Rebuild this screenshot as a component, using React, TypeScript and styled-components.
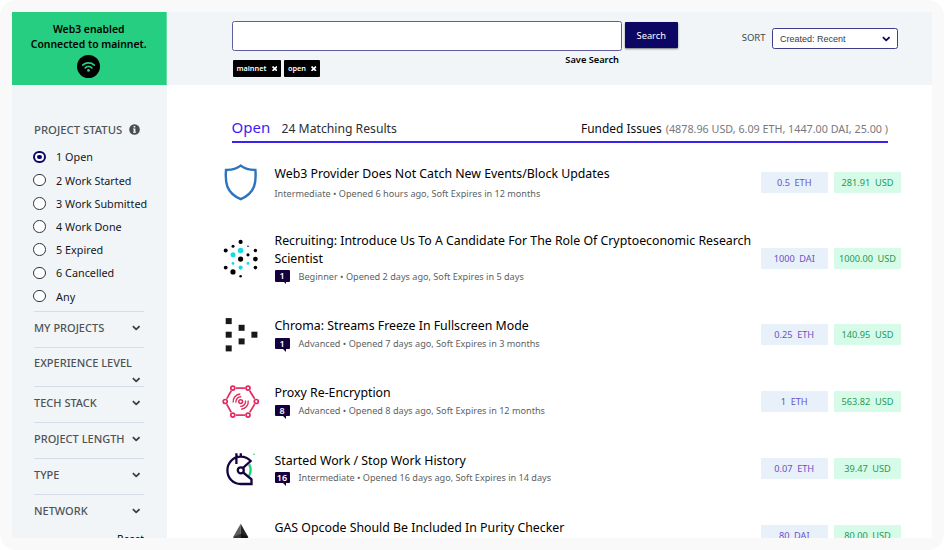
import React from "react";
import styled, { createGlobalStyle } from "styled-components";

const GlobalStyle = createGlobalStyle`
  *, *::before, *::after { box-sizing: border-box; }
  body { margin: 0; background: #fff; font-family: "Noto Sans", "Open Sans", sans-serif; color: #000; }
`;

const Frame = styled.div`
  width: 944px;
  height: 550px;
  padding: 12px;
  background: #f9f9f9;
  border-radius: 16px;
`;

const Page = styled.div`
  display: grid;
  grid-template-columns: 154.5px 1fr;
  height: 526px;
  overflow: hidden;
  background: #fff;
`;

/* Sidebar */

const Sidebar = styled.aside`
  height: 560px;
  background: #f1f5f8;
`;

const Network = styled.div`
  display: flex;
  flex-direction: column;
  align-items: center;
  height: 72.5px;
  padding-top: 9.6px;
  background: #25ce81;
  border-right: 1px solid #62dda4;
  font-size: 10.4px;
  font-weight: 600;
  line-height: 15.5px;
  text-align: center;
`;

const WifiBadge = styled.div`
  display: grid;
  place-items: center;
  width: 23px;
  height: 23px;
  margin-top: 2.6px;
  border-radius: 50%;
  background: #000;
`;

const Filters = styled.div`
  width: 132px;
  padding: 36.6px 0 0 22px;
`;

const StatusHeading = styled.div`
  display: flex;
  align-items: center;
  gap: 7px;
  height: 17px;
  margin-bottom: 7.3px;
  font-size: 11.3px;
  font-weight: 500;
  color: #4f5356;
  white-space: nowrap;
`;

const StatusOption = styled.div`
  display: flex;
  align-items: center;
  gap: 10.3px;
  width: 122px;
  height: 23.2px;
  margin-left: -0.8px;
  font-size: 10.8px;
  color: #15171a;
  white-space: nowrap;
`;

const Radio = styled.span<{ $on?: boolean }>`
  display: grid;
  flex: none;
  place-items: center;
  width: 12.6px;
  height: 12.6px;
  border: ${(p) => (p.$on ? "2px solid #0d0764" : "1px solid #33363a")};
  border-radius: 50%;
  background: #fff;
  &::after {
    content: "";
    width: 4.6px;
    height: 4.6px;
    border-radius: 50%;
    background: ${(p) => (p.$on ? "#0d0764" : "transparent")};
  }
`;

const Sections = styled.div`
  margin-top: 3px;
`;

const Section = styled.div<{ $tall?: boolean }>`
  display: flex;
  flex-wrap: wrap;
  align-content: flex-start;
  justify-content: space-between;
  height: ${(p) => (p.$tall ? "39.5px" : "35.9px")};
  padding: 7.8px 4px 0 0;
  border-top: 1px solid #d6dde8;
  font-size: 11px;
  font-weight: 500;
  line-height: 16px;
  color: #4f5356;
  white-space: nowrap;
`;

const SectionName = styled.span<{ $full?: boolean }>`
  flex: ${(p) => (p.$full ? "0 0 100%" : "0 0 auto")};
`;

const SectionChevron = styled.span`
  display: flex;
  align-items: center;
  height: 17px;
  margin-left: auto;
`;

const Reset = styled.div`
  margin-top: 1px;
  text-align: right;
  font-size: 10.4px;
  line-height: 16px;
`;

/* Main column */

const Main = styled.main`
  min-width: 0;
`;

const Toolbar = styled.header`
  display: flex;
  align-items: flex-start;
  height: 72.5px;
  padding: 9px 34px 0 65px;
  background: #f1f5f8;
`;

const SearchColumn = styled.div`
  width: 390px;
`;

const SearchInput = styled.div`
  height: 29.5px;
  background: #fff;
  border: 1px solid #5f5da0;
  border-radius: 2.5px;
`;

const SearchFooter = styled.div`
  display: flex;
  justify-content: space-between;
  align-items: flex-start;
  padding: 0 2.5px 0 1px;
`;

const Tags = styled.div`
  display: flex;
  gap: 3px;
  padding-top: 9px;
`;

const Tag = styled.span`
  display: flex;
  align-items: center;
  gap: 5.2px;
  height: 17.5px;
  padding: 0 3.8px 0 4px;
  border-radius: 1px;
  background: #000;
  color: #fff;
  font-size: 7.3px;
  font-weight: 600;
  line-height: 17px;
`;

const SaveSearch = styled.span`
  padding-top: 1.4px;
  font-size: 9.25px;
  font-weight: 600;
  line-height: 15px;
`;

const SearchButton = styled.button`
  width: 53.5px;
  height: 26px;
  margin: 1px 0 0 3px;
  padding: 0;
  border: 0;
  border-radius: 1px;
  background: #0d0764;
  box-shadow: 0 1px 2px rgba(0, 0, 0, 0.5);
  color: #fff;
  font-family: inherit;
  font-size: 9.3px;
`;

const Sort = styled.div`
  display: flex;
  align-items: center;
  gap: 6.5px;
  margin: 7px 0 0 auto;
  font-size: 9.5px;
  color: #44484c;
`;

const SortLabel = styled.span`
  padding-bottom: 2px;
`;

const SortSelect = styled.div`
  display: flex;
  align-items: center;
  justify-content: space-between;
  width: 126px;
  height: 21px;
  padding: 0 7px;
  border: 1px solid #3f3d8c;
  border-radius: 2.5px;
  background: #fff;
  color: #383c40;
  font-family: "Liberation Sans", Arial, sans-serif;
  font-size: 9px;
`;

const ResultsHeader = styled.div`
  display: flex;
  align-items: baseline;
  height: 58px;
  margin: 0 44px 0 65px;
  padding-top: 29px;
  border-bottom: 2px solid #3a22f0;
  line-height: 26px;
  white-space: nowrap;
`;

const ResultsState = styled.span`
  width: 50px;
  font-size: 15px;
  color: #3a1cf5;
`;

const ResultsCount = styled.span`
  font-size: 12.2px;
  color: #2b2e33;
`;

const Funded = styled.span`
  margin-left: auto;
  font-size: 11.95px;
  color: #0b0b14;
`;

const FundedTotals = styled.span`
  margin-left: 4px;
  font-size: 10.75px;
  color: #77797c;
`;

const List = styled.div`
  padding-top: 6px;
`;

const IssueRow = styled.article<{ $tall?: boolean }>`
  display: grid;
  grid-template-columns: 47px 478.5px 141px;
  column-gap: 7.5px;
  align-items: center;
  height: ${(p) => (p.$tall ? "85px" : "67.2px")};
  padding-left: 53.5px;
`;

const Body = styled.div<{ $plain?: boolean }>`
  display: flex;
  flex-direction: column;
  gap: ${(p) => (p.$plain ? "2.4px" : "0")};
  padding-top: ${(p) => (p.$plain ? "3px" : "0")};
`;

const Title = styled.h3`
  margin: 0;
  font-size: 12.33px;
  font-weight: 400;
  line-height: 18px;
`;

const Meta = styled.div`
  display: flex;
  align-items: center;
  gap: 9px;
  height: 16px;
  font-size: 9.15px;
  color: #5d5f62;
  white-space: nowrap;
`;

const Comments = styled.span`
  position: relative;
  width: 15px;
  height: 11.5px;
  border-radius: 1px;
  background: #15003e;
  color: #fff;
  font-size: 9px;
  font-weight: 600;
  line-height: 11.5px;
  text-align: center;
  &::after {
    content: "";
    position: absolute;
    left: 8px;
    top: 11px;
    border-top: 3px solid #15003e;
    border-left: 3px solid transparent;
  }
`;

const Amounts = styled.div`
  display: grid;
  grid-template-columns: 67.5px 67px;
  gap: 6px;
`;

const Pill = styled.span<{ $usd?: boolean }>`
  height: 21px;
  border-radius: 1px;
  background: ${(p) => (p.$usd ? "#d7fbe9" : "#e8f0fa")};
  color: ${(p) => (p.$usd ? "#259a57" : "#6a52c4")};
  font-size: 9.2px;
  line-height: 21.5px;
  word-spacing: 2.2px;
  text-align: center;
`;

/* Icons */

const Chevron = ({ color = "#3c4044" }: { color?: string }) => (
  <svg width="8.4" height="6" viewBox="0 0 10 7" fill="none" stroke={color} strokeWidth="2.1" strokeLinejoin="round">
    <path d="M1 1.3 5 5.2 9 1.3" />
  </svg>
);

const Wifi = () => (
  <svg width="15" height="13" viewBox="0 0 15 13" fill="none" stroke="#25ce81" strokeWidth="1.7" strokeLinecap="round">
    <path d="M1.7 5.1C4.9 2.1 10.1 2.1 13.3 5.1M4.2 7.8c1.9-1.8 4.7-1.8 6.6 0" />
    <circle cx="7.5" cy="10.4" r="1.4" fill="#25ce81" stroke="none" />
  </svg>
);

const Info = () => (
  <svg width="11" height="11" viewBox="0 0 11 11">
    <circle cx="5.5" cy="5.5" r="5.3" fill="#4a4d50" />
    <path d="M4.6 2h1.7v1.5H4.6zM4 4.5h2.4v3.2h.7v1.1H4V7.7h.7V5.6H4z" fill="#f1f5f8" />
  </svg>
);

const Close = () => (
  <svg width="5.5" height="5.5" viewBox="0 0 6 6" stroke="#fff" strokeWidth="1.8">
    <path d="m.6.6 4.8 4.8M5.4.6.6 5.4" />
  </svg>
);

const Logo = ({ children }: { children: React.ReactNode }) => (
  <svg width="41" height="41" viewBox="0 0 41 41" fill="none">{children}</svg>
);

const ShieldLogo = () => (
  <Logo>
    <path d="M20.7 3.6C16.7 6.6 11.5 8.1 6 7.9 5.1 19.8 5.6 30.4 20.7 37.2 35.8 30.4 36.3 19.8 35.4 7.9 29.9 8.1 24.7 6.6 20.7 3.6Z" stroke="#2d74bd" strokeWidth="2.4" />
  </Logo>
);

const cyan = "#12dbe6";
const dots: [number, number, number, string?][] = [
  [20.6, 3.9, 2.1], [13, 8.2, 1.5], [28, 8.2, 0.8], [5.7, 12.5, 2], [20.6, 12.5, 2.8, cyan], [35.4, 12.5, 1.7],
  [13, 16.8, 2.5, cyan], [28, 16.8, 1.6], [20.6, 21.1, 2.6], [35.4, 21.1, 2.4], [13, 25.4, 1.4, cyan], [28, 25.4, 1.4, cyan],
  [5.7, 29.6, 1.9], [20.6, 29.6, 2.1, cyan], [35.4, 29.6, 1.8], [13, 33.9, 2.6], [20.6, 38.2, 1.3],
];
const DotsLogo = () => (
  <Logo>{dots.map(([x, y, r, c], i) => <circle key={i} cx={x} cy={y} r={r} fill={c ?? "#000"} />)}</Logo>
);

const squares = [[8.7, 7.1], [21.6, 13.8], [8.7, 20.7], [34.4, 20.7], [21.6, 27.4], [8.7, 34.4]];
const SquaresLogo = () => (
  <Logo>{squares.map(([x, y], i) => <rect key={i} x={x - 3} y={y - 3} width="6" height="6" fill="#191919" />)}</Logo>
);

const nodes = [[12.8, 7.1], [28, 7.1], [36.3, 20.5], [28, 34.1], [12.8, 34.1], [5.2, 20.5]];
const HexLogo = () => (
  <Logo>
    <g stroke="#e02c5e" strokeWidth="1.7">
      {nodes.map(([x, y], i) => {
        const [a, b] = nodes[(i + 1) % nodes.length];
        const t = 0.2;
        return <line key={i} x1={x + (a - x) * t} y1={y + (b - y) * t} x2={a - (a - x) * t} y2={b - (b - y) * t} />;
      })}
      {nodes.map(([x, y], i) => <circle key={i} cx={x} cy={y} r="2" />)}
      <circle cx="20.7" cy="20.6" r="1.9" strokeWidth="1.5" />
      <path strokeWidth="1.4" d="M15.9 21.7A5 5 0 0 1 21.2 15.8M13.2 21.5A7.5 7.5 0 0 1 20.3 13M25.5 19.5A5 5 0 0 1 20.2 25.4M28.2 19.7A7.5 7.5 0 0 1 21.1 28.2" />
    </g>
  </Logo>
);

const CoinLogo = () => (
  <Logo>
    <path d="M29.2 16.4c1.8 3.6 1.8 8-.2 11.6" stroke="#16d67c" strokeWidth="2.4" />
    <circle cx="34" cy="6.2" r=".8" fill="#16d67c" />
    <path d="M23 19.9 30.7 13C28 10.1 24.6 8.7 20.8 8.7 13 8.7 7.4 15 7.4 22.4S13 36 20.8 36H31.5V31.3L23.2 24.5M16.4 5.2V16M20.8 5.2V9" stroke="#150340" strokeWidth="2.3" />
    <circle cx="20.8" cy="22.3" r="3" stroke="#150340" strokeWidth="2.3" />
  </Logo>
);

const DiamondLogo = () => (
  <Logo>
    <path d="M20.7 8.7 13 22.2l7.7 4.3z" fill="#5e5e5e" />
    <path d="m20.7 8.7 7.7 13.5-7.7 4.3z" fill="#252525" />
    <path d="m13 22.2 7.7-3.5v7.8z" fill="#353535" />
    <path d="m28.4 22.2-7.7-3.5v7.8z" fill="#111" />
  </Logo>
);

/* Data */

const statuses = ["1 Open", "2 Work Started", "3 Work Submitted", "4 Work Done", "5 Expired", "6 Cancelled", "Any"];
const sections = ["MY PROJECTS", "EXPERIENCE LEVEL", "TECH STACK", "PROJECT LENGTH", "TYPE", "NETWORK"];

interface Issue {
  title: string;
  meta?: string;
  comments?: number;
  amount: string;
  usd: string;
  Icon: React.ComponentType;
  tall?: boolean;
}

const issues: Issue[] = [
  { title: "Web3 Provider Does Not Catch New Events/Block Updates", meta: "Intermediate • Opened 6 hours ago, Soft Expires in 12 months", amount: "0.5 ETH", usd: "281.91 USD", Icon: ShieldLogo },
  { title: "Recruiting: Introduce Us To A Candidate For The Role Of Cryptoeconomic Research Scientist", meta: "Beginner • Opened 2 days ago, Soft Expires in 5 days", comments: 1, amount: "1000 DAI", usd: "1000.00 USD", Icon: DotsLogo, tall: true },
  { title: "Chroma: Streams Freeze In Fullscreen Mode", meta: "Advanced • Opened 7 days ago, Soft Expires in 3 months", comments: 1, amount: "0.25 ETH", usd: "140.95 USD", Icon: SquaresLogo },
  { title: "Proxy Re-Encryption", meta: "Advanced • Opened 8 days ago, Soft Expires in 12 months", comments: 8, amount: "1 ETH", usd: "563.82 USD", Icon: HexLogo },
  { title: "Started Work / Stop Work History", meta: "Intermediate • Opened 16 days ago, Soft Expires in 14 days", comments: 16, amount: "0.07 ETH", usd: "39.47 USD", Icon: CoinLogo },
  { title: "GAS Opcode Should Be Included In Purity Checker", amount: "80 DAI", usd: "80.00 USD", Icon: DiamondLogo },
];

export default function App() {
  return (
    <>
      <GlobalStyle />
      <Frame>
        <Page>
          <Sidebar>
            <Network>
              <span>Web3 enabled</span>
              <span>Connected to mainnet.</span>
              <WifiBadge><Wifi /></WifiBadge>
            </Network>
            <Filters>
              <StatusHeading>PROJECT STATUS <Info /></StatusHeading>
              {statuses.map((s, i) => (
                <StatusOption key={s}><Radio $on={i === 0} />{s}</StatusOption>
              ))}
              <Sections>
                {sections.map((s) => {
                  const wraps = s === "EXPERIENCE LEVEL";
                  return (
                    <Section key={s} $tall={wraps}>
                      <SectionName $full={wraps}>{s}</SectionName>
                      <SectionChevron><Chevron /></SectionChevron>
                    </Section>
                  );
                })}
              </Sections>
              <Reset>Reset</Reset>
            </Filters>
          </Sidebar>
          <Main>
            <Toolbar>
              <SearchColumn>
                <SearchInput />
                <SearchFooter>
                  <Tags>
                    <Tag>mainnet <Close /></Tag>
                    <Tag>open <Close /></Tag>
                  </Tags>
                  <SaveSearch>Save Search</SaveSearch>
                </SearchFooter>
              </SearchColumn>
              <SearchButton>Search</SearchButton>
              <Sort>
                <SortLabel>SORT</SortLabel>
                <SortSelect>Created: Recent <Chevron color="#0d0764" /></SortSelect>
              </Sort>
            </Toolbar>
            <ResultsHeader>
              <ResultsState>Open</ResultsState>
              <ResultsCount>24 Matching Results</ResultsCount>
              <Funded>Funded Issues</Funded>
              <FundedTotals>(4878.96 USD, 6.09 ETH, 1447.00 DAI, 25.00 )</FundedTotals>
            </ResultsHeader>
            <List>
              {issues.map(({ title, meta, comments, amount, usd, Icon, tall }) => (
                <IssueRow key={title} $tall={tall}>
                  <Icon />
                  <Body $plain={!!meta && !comments}>
                    <Title>{title}</Title>
                    <Meta>{comments && <Comments>{comments}</Comments>}{meta}</Meta>
                  </Body>
                  <Amounts>
                    <Pill>{amount}</Pill>
                    <Pill $usd>{usd}</Pill>
                  </Amounts>
                </IssueRow>
              ))}
            </List>
          </Main>
        </Page>
      </Frame>
    </>
  );
}
